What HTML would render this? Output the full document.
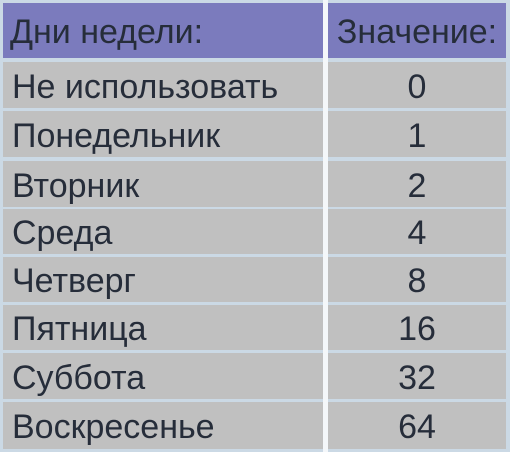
<!DOCTYPE html>
<html><head><meta charset="utf-8"><style>
html,body{margin:0;padding:0;background:#fff;width:510px;height:454px;overflow:hidden}
.c{position:absolute;font-family:"Liberation Sans","DejaVu Sans",sans-serif;font-size:34px;color:#262d3a;line-height:1;display:flex;align-items:center;box-sizing:border-box;white-space:nowrap;padding-top:3px}
.l{left:3px;width:320px;padding-left:9px}
.r{left:328px;width:178px;justify-content:center}
.h{background:#7b7bbd}
.b{background:#c0c0c0}
.bg{position:absolute;left:0;top:0;width:510px;height:452px;background:#cbd9e5}
.gap{position:absolute;left:323px;top:0;width:5px;height:452px;background:#f4f7fa}
</style></head><body>
<div class="bg"></div>
<div class="gap"></div>
<div class="c l h" style="top:3px;height:55px;padding-left:7px">Дни недели:</div>
<div class="c r h" style="top:3px;height:55px">Значение:</div>

<div class="c l b" style="top:62px;height:46px">Не использовать</div>
<div class="c r b" style="top:62px;height:46px">0</div>
<div class="c l b" style="top:111px;height:46px">Понедельник</div>
<div class="c r b" style="top:111px;height:46px">1</div>
<div class="c l b" style="top:161px;height:46px">Вторник</div>
<div class="c r b" style="top:161px;height:46px">2</div>
<div class="c l b" style="top:209px;height:45px">Среда</div>
<div class="c r b" style="top:209px;height:45px">4</div>
<div class="c l b" style="top:257px;height:45px">Четверг</div>
<div class="c r b" style="top:257px;height:45px">8</div>
<div class="c l b" style="top:305px;height:45px">Пятница</div>
<div class="c r b" style="top:305px;height:45px">16</div>
<div class="c l b" style="top:353px;height:46px">Суббота</div>
<div class="c r b" style="top:353px;height:46px">32</div>
<div class="c l b" style="top:402px;height:47px">Воскресенье</div>
<div class="c r b" style="top:402px;height:47px">64</div>
</body></html>
